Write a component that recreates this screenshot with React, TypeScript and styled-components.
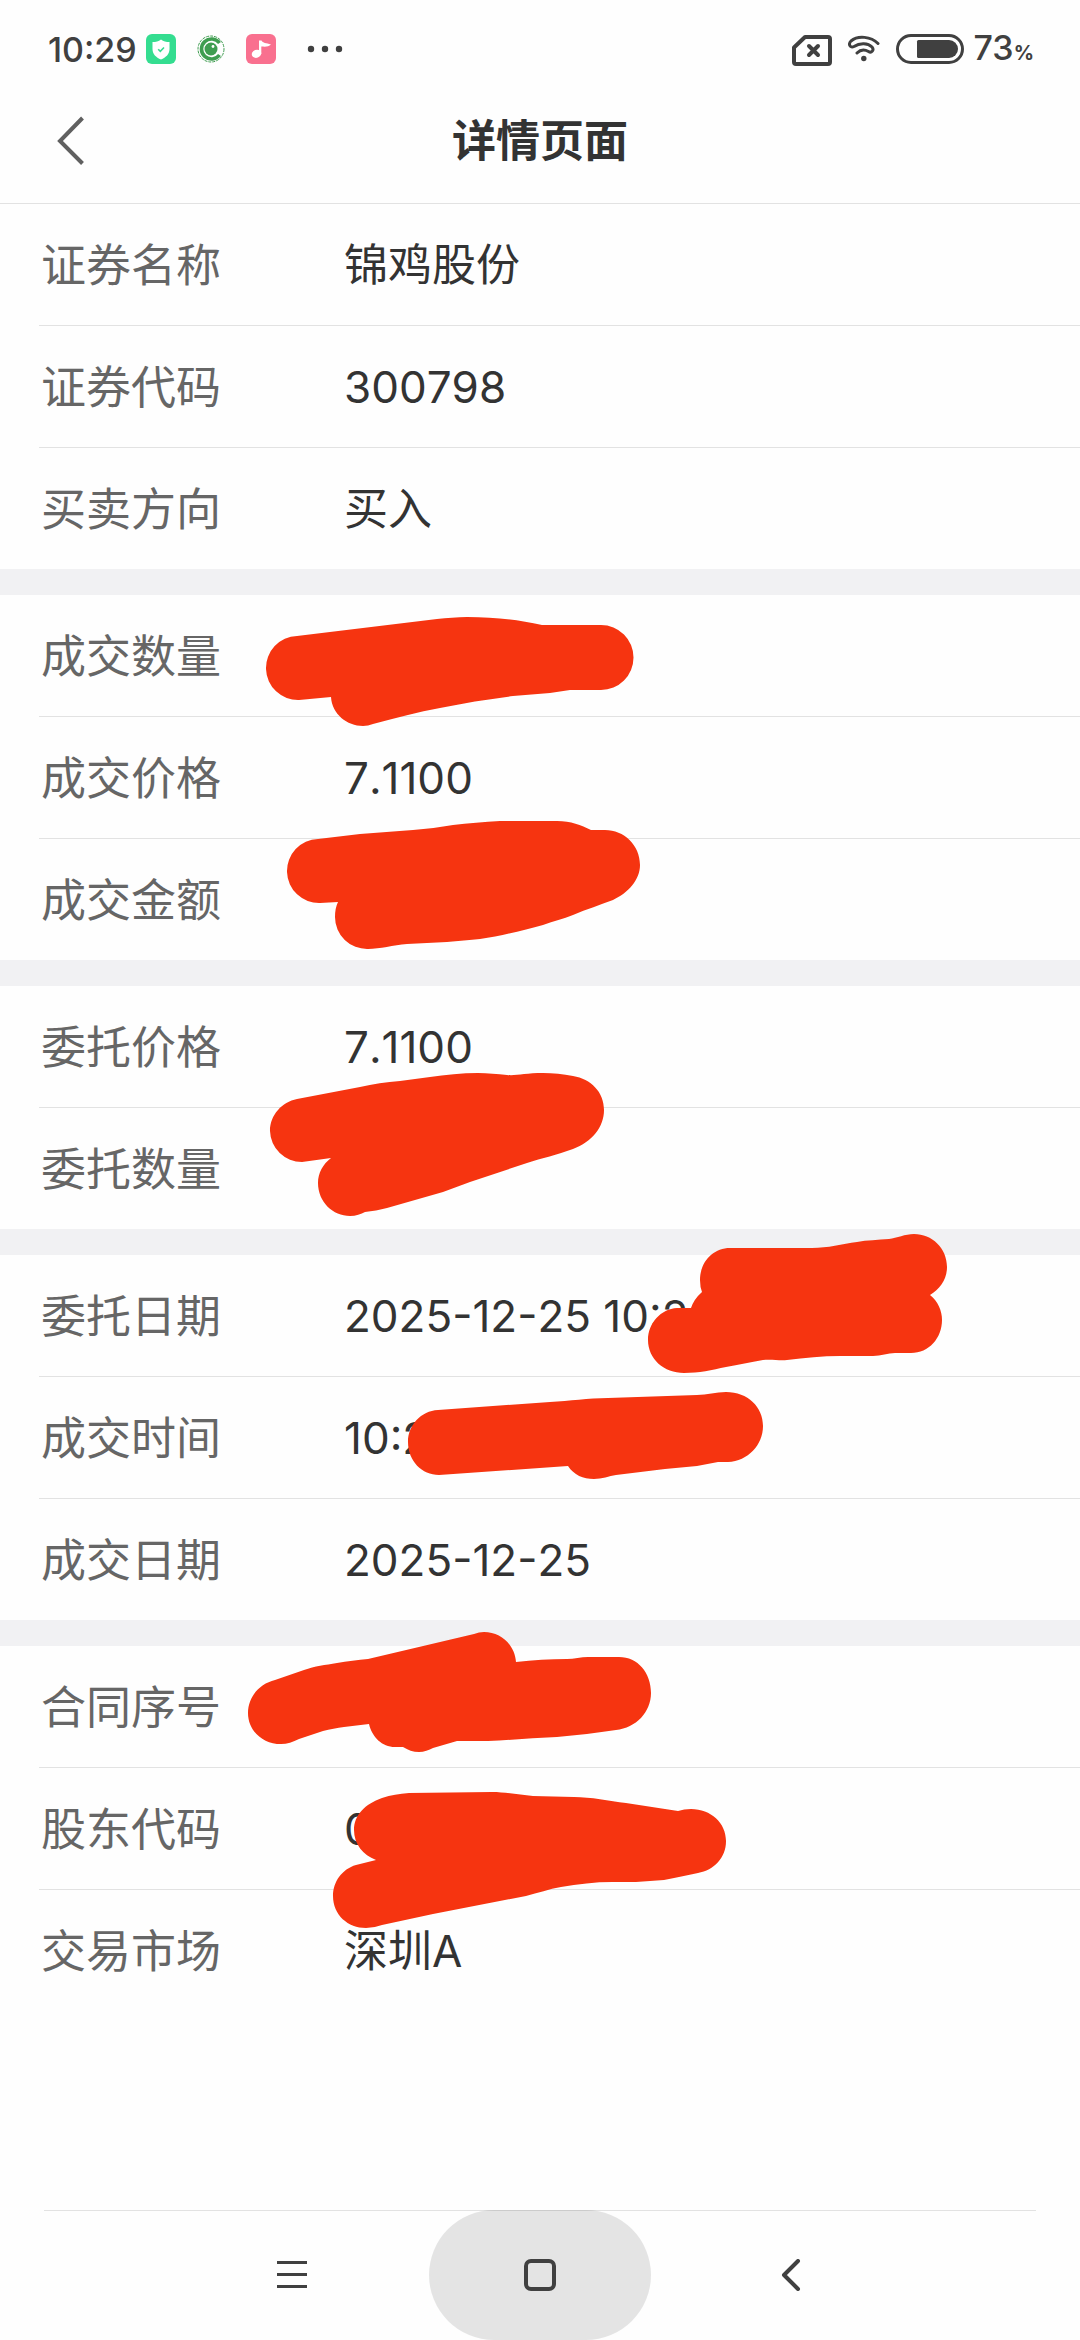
import React from "react";
import styled, { createGlobalStyle } from "styled-components";

const GlobalStyle = createGlobalStyle`
  * { box-sizing: border-box; }
  body {
    margin: 0;
    background: #fefefe;
    font-family: "Inter", "Noto Sans CJK SC", sans-serif;
  }
`;

const Page = styled.div`
  display: flex;
  flex-direction: column;
  min-height: 100vh;
`;

const StatusBar = styled.div`
  display: flex;
  align-items: center;
  justify-content: space-between;
  height: 82px;
  padding: 16px 46px 0 48px;
  color: #404040;
`;

const StatusGroup = styled.div<{ $gap: number }>`
  display: flex;
  align-items: center;
  gap: ${(p) => p.$gap}px;
`;

const StatusText = styled.span`
  padding-top: 2px;
  font-size: 34px;
  line-height: 40px;
  font-weight: 500;
`;

const Percent = styled.span`
  font-size: 20px;
  font-weight: 700;
`;

const AppIcons = styled.div`
  display: flex;
  align-items: center;
  gap: 20px;
`;

const Header = styled.header`
  display: grid;
  grid-template-columns: 120px 1fr 120px;
  align-items: center;
  height: 122px;
  padding-bottom: 4px;
  border-bottom: 1px solid #e2e2e2;
`;

const IconButton = styled.button`
  display: flex;
  align-items: center;
  height: 80px;
  padding: 0 0 0 56px;
  border: 0;
  background: none;
  color: #606060;
`;

const Title = styled.h1`
  margin: 0;
  text-align: center;
  font-size: 44px;
  line-height: 60px;
  font-weight: 700;
  color: #333333;
`;

const Sections = styled.main`
  display: flex;
  flex-direction: column;
  gap: 26px;
  background: #f1f1f3;
`;

const Section = styled.dl`
  margin: 0;
  padding-left: 39px;
  background: #fefefe;
`;

const Row = styled.div`
  position: relative;
  display: flex;
  align-items: center;
  height: 122px;
  padding-left: 2px;
  border-bottom: 1px solid #e2e2e2;

  &:last-child {
    height: 121px;
    border-bottom: 0;
  }
`;

const Label = styled.dt`
  flex: 0 0 303px;
  padding-top: 2px;
  font-size: 45px;
  line-height: 60px;
  color: #666666;
`;

const Value = styled.dd`
  margin: 0;
  font-size: 44px;
  line-height: 60px;
  font-kerning: none;
  color: #333333;
  white-space: pre;
`;

const Scribble = styled.svg`
  position: absolute;
  z-index: 1;
  top: 0;
  left: -39px;
  width: 1080px;
  height: 122px;
  overflow: visible;
  pointer-events: none;
`;

const NavBar = styled.nav`
  display: flex;
  justify-content: center;
  gap: 27px;
  height: 130px;
  margin: auto 44px 0;
  box-shadow: inset 0 1px 0 #e2e2e2;
`;

const NavButton = styled.button<{ $active?: boolean }>`
  display: flex;
  align-items: center;
  justify-content: center;
  width: 222px;
  padding: 0;
  border: 0;
  border-radius: 65px;
  background: ${(p) => (p.$active ? "rgba(0, 0, 0, 0.1)" : "none")};
  color: #404040;
`;

type Item = { label: string; value?: string; mark?: string };

const sections: Item[][] = [
  [
    { label: "证券名称", value: "锦鸡股份" },
    { label: "证券代码", value: "300798" },
    { label: "买卖方向", value: "买入" },
  ],
  [
    {
      label: "成交数量",
      mark: "M297 41A32 32 0 0 0 299 105L331 102C332 119 347 131 363 131Q368 131 373 129C396 123 418 117 440 113C464 108 489 104 513 101L550 98L570 95H601A32 32 0 0 0 601 30H542C518 25 495 22 467 22C457 22 447 23 437 24Z",
    },
    { label: "成交价格", value: "7.1100" },
    {
      label: "成交金额",
      mark: "M318 0A32 32 0 0 0 320 64L338 63Q335 69 335 78A32 32 0 0 0 368 110C380 110 393 106 407 105L447 103C458 102 470 101 480 100C502 97 524 91 543 86C554 82 563 80 573 76C587 70 600 66 613 61C628 54 640 41 640 26C640 6 624 -9 605 -9H591C581 -14 571 -18 557 -18H500C484 -17 468 -16 453 -14C440 -12 427 -10 413 -9C395 -8 378 -6 360 -5Z",
    },
  ],
  [
    { label: "委托价格", value: "7.1100" },
    {
      label: "委托数量",
      mark: "M297 -9C282 -6 270 7 270 23A32 32 0 0 0 302 54L331 50C323 56 318 65 318 75C318 94 333 108 350 108C356 108 361 106 365 104C372 103 380 102 387 100L443 84C452 81 461 77 470 74L527 55C542 50 557 47 573 41C592 34 604 19 604 2C604 -16 591 -29 573 -32C563 -34 553 -35 543 -35C525 -35 516 -32 507 -33C497 -34 488 -35 478 -35C462 -35 445 -33 430 -31C420 -30 410 -28 400 -27C386 -26 373 -24 360 -21Z",
    },
  ],
  [
    {
      label: "委托日期",
      value: "2025-12-25 10:2",
      mark: "M730 -7C713 -7 700 7 700 25Q700 32 702 37Q694 44 691 53H677C661 54 648 68 648 85C648 104 664 118 684 118C699 118 712 115 726 112C739 110 750 107 763 105C772 104 780 106 787 105C805 103 822 101 840 101H873C881 101 888 98 895 98H911C929 98 942 83 942 65C942 56 938 46 930 40C940 34 947 24 947 12C947 -7 932 -21 914 -21C905 -21 897 -17 889 -16C878 -15 867 -15 857 -13C842 -11 828 -7 812 -7Z",
    },
    {
      label: "成交时间",
      value: "10:2",
      mark: "M438 33C421 34 408 48 408 65C408 84 422 98 439 98L568 89C574 98 583 102 594 102C602 102 609 99 616 98L665 92L697 89C704 88 711 86 718 85H728C748 84 763 68 763 49C763 30 748 15 726 15C716 15 707 18 697 18L608 21C588 21 570 24 550 25Z",
    },
    { label: "成交日期", value: "2025-12-25" },
  ],
  [
    {
      label: "合同序号",
      mark: "M275 34C259 38 248 51 248 67C248 85 263 98 281 98C287 98 293 96 299 93L323 85C330 83 337 82 344 81L369 78C372 91 382 101 395 101H403C408 104 413 106 419 106C424 106 429 104 433 102L457 95H488C511 94 534 92 557 91C577 89 597 87 616 84C636 82 651 66 651 47C651 27 638 11 619 11H588C581 11 574 13 567 13C550 13 533 14 516 16C515 -1 501 -14 484 -14Q479 -14 474 -12L368 13C358 14 347 15 337 17C325 19 315 20 304 24Z",
    },
    {
      label: "股东代码",
      value: "0",
      mark: "M409 25C399 26 391 27 382 30C365 36 354 47 354 62C354 76 363 87 376 92L356 97C342 101 333 114 333 128C333 147 348 160 366 160Q374 160 382 157L433 146L526 128C538 125 549 121 561 119C578 116 595 114 612 114H636L664 112C676 110 687 107 698 105C714 102 726 90 726 73C726 55 711 41 691 41Q684 41 678 43L626 35C609 33 591 29 574 29L533 28C519 27 506 24 492 24Z",
    },
    { label: "交易市场", value: "深圳A" },
  ],
];

const ShieldIcon = () => (
  <svg width="30" height="30" viewBox="0 0 30 30" aria-hidden="true">
    <rect width="30" height="30" rx="6" fill="#34dd90" />
    <path d="M15 5.500C17.500 7.500 20 8 23.500 8V15C23.500 20 20 23.500 15 25.500C10 23.500 6.500 20 6.500 15V8C10 8 12.500 7.500 15 5.500Z" fill="#fff" />
    <path d="M12.200 15.200L14.300 17.300L18 13.500" fill="none" stroke="#34dd90" strokeWidth="1.600" />
  </svg>
);

const CircleIcon = () => (
  <svg width="30" height="30" viewBox="0 0 30 30" aria-hidden="true">
    <circle cx="15" cy="15" r="13" fill="none" stroke="#3f9d50" strokeWidth="1" strokeDasharray="3 1" />
    <path d="M23.500 9A10 10 0 1 0 23.500 21" fill="none" stroke="#3f9d50" strokeWidth="3.600" />
    <circle cx="15" cy="15" r="6.500" fill="#3f9d50" />
    <circle cx="17" cy="12.500" r="1.400" fill="#fff" />
  </svg>
);

const MusicIcon = () => (
  <svg width="30" height="30" viewBox="0 0 30 30" aria-hidden="true">
    <rect width="30" height="30" rx="6" fill="#f9708f" />
    <ellipse cx="10.500" cy="19.800" rx="4.800" ry="4" fill="#fff" transform="rotate(-20 10.500 19.800)" />
    <path d="M13 20V6.500H15.500C17 9.500 20 8.500 25 10.500C22.500 13 19 12.800 15.300 12.500V20Z" fill="#fff" />
  </svg>
);

const MoreIcon = () => (
  <svg width="64" height="30" viewBox="0 0 64 30" fill="#404040" aria-hidden="true">
    <circle cx="15" cy="15" r="3.200" />
    <circle cx="29" cy="15" r="3.200" />
    <circle cx="43" cy="15" r="3.200" />
  </svg>
);

const SimIcon = () => (
  <svg width="40" height="34" viewBox="0 0 40 34" fill="none" stroke="currentColor" aria-hidden="true">
    <path d="M13 5H36Q38 5 38 7V30Q38 32 36 32H4Q2 32 2 30V15.500Z" strokeWidth="4" strokeLinejoin="round" />
    <path d="M17 14L26 23M26 14L17 23" strokeWidth="4" strokeLinecap="round" />
  </svg>
);

const WifiIcon = () => (
  <svg width="32" height="30" viewBox="0 0 32 30" fill="none" stroke="currentColor" strokeWidth="3" strokeLinecap="round" aria-hidden="true">
    <path d="M30 9.500C23 2.500 10 1 3 7C0 10 2 14.500 6 12.500C12 8.500 20 9 24 13C26.500 16 23.500 19.500 20.500 17.500C17 15.500 12.500 15.500 9 19" />
    <circle cx="15.800" cy="24.500" r="2.700" fill="currentColor" stroke="none" />
  </svg>
);

const BatteryIcon = () => (
  <svg width="68" height="30" viewBox="0 0 68 30" aria-hidden="true">
    <rect x="1.500" y="1.500" width="65" height="27" rx="13.500" fill="none" stroke="currentColor" strokeWidth="3" />
    <path d="M22.500 6H53A9 9 0 0 1 53 24H22.500Q21 24 21 22.500V7.500Q21 6 22.500 6Z" fill="currentColor" />
  </svg>
);

const BackIcon = () => (
  <svg width="30" height="50" viewBox="0 0 30 50" fill="none" stroke="currentColor" strokeWidth="4" aria-hidden="true">
    <path d="M26.500 2L4 25L26.500 47.500" />
  </svg>
);

export default function App() {
  return (
    <Page>
      <GlobalStyle />
      <StatusBar>
        <StatusGroup $gap={9}>
          <StatusText>10:29</StatusText>
          <AppIcons>
            <ShieldIcon />
            <CircleIcon />
            <MusicIcon />
            <MoreIcon />
          </AppIcons>
        </StatusGroup>
        <StatusGroup $gap={16}>
          <SimIcon />
          <WifiIcon />
          <StatusGroup $gap={10}>
            <BatteryIcon />
            <StatusText>
              73<Percent>%</Percent>
            </StatusText>
          </StatusGroup>
        </StatusGroup>
      </StatusBar>
      <Header>
        <IconButton aria-label="返回">
          <BackIcon />
        </IconButton>
        <Title>详情页面</Title>
      </Header>
      <Sections>
        {sections.map((items) => (
          <Section key={items[0].label}>
            {items.map((item) => (
              <Row key={item.label}>
                <Label>{item.label}</Label>
                <Value>{item.value}</Value>
                {item.mark && (
                  <Scribble viewBox="0 0 1080 122" aria-hidden="true">
                    <path d={item.mark} fill="#f63410" />
                  </Scribble>
                )}
              </Row>
            ))}
          </Section>
        ))}
      </Sections>
      <NavBar>
        <NavButton aria-label="最近任务">
          <svg width="32" height="32" viewBox="0 0 32 32" stroke="currentColor" strokeWidth="3" aria-hidden="true">
            <path d="M2 3.500H32M2 15.500H32M2 27.500H32" />
          </svg>
        </NavButton>
        <NavButton $active aria-label="主屏幕">
          <svg width="32" height="32" viewBox="0 0 32 32" fill="none" stroke="currentColor" strokeWidth="4" aria-hidden="true">
            <rect x="2" y="2" width="28" height="28" rx="5" />
          </svg>
        </NavButton>
        <NavButton aria-label="返回上一级">
          <svg width="32" height="32" viewBox="0 0 32 32" fill="none" stroke="currentColor" strokeWidth="4" strokeLinecap="round" strokeLinejoin="round" aria-hidden="true">
            <path d="M25 2L11 16L25 30" />
          </svg>
        </NavButton>
      </NavBar>
    </Page>
  );
}
